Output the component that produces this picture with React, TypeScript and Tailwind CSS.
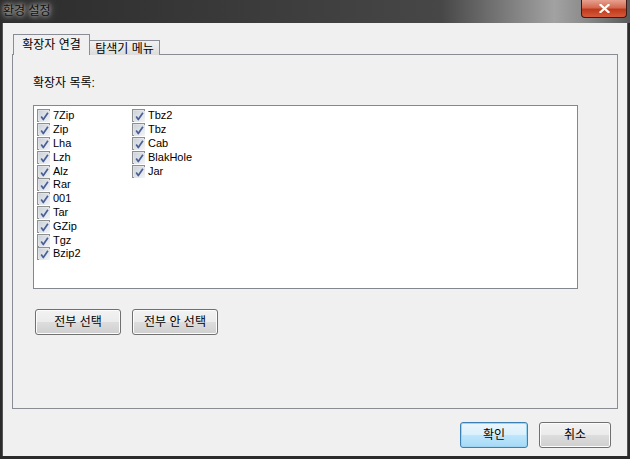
import React from "react";

const font = "font-['Liberation_Sans','Noto_Sans_CJK_KR',sans-serif]";

const left = ["7Zip", "Zip", "Lha", "Lzh", "Alz", "Rar", "001", "Tar", "GZip", "Tgz", "Bzip2"];
const right = ["Tbz2", "Tbz", "Cab", "BlakHole", "Jar"];

const CheckBox = () => (
  <span className="w-[13px] h-[13px] border border-[#8e8f8f] bg-[linear-gradient(135deg,#d8dde3,#f4f6f8)] p-[1px] shrink-0">
    <svg viewBox="0 0 11 11" className="w-[11px] h-[11px]">
      <rect x="0" y="0" width="11" height="11" fill="url(#cbg)" />
      <defs>
        <linearGradient id="cbg" x1="0" y1="0" x2="1" y2="1">
          <stop offset="0" stopColor="#cdd3da" />
          <stop offset="1" stopColor="#f3f5f7" />
        </linearGradient>
      </defs>
      <path d="M2.2 5.6 L4.3 8.6 L8.9 1.8" fill="none" stroke="#4a5f97" strokeWidth="1.7" strokeLinejoin="round" />
    </svg>
  </span>
);

const Item = ({ label }: { label: string }) => (
  <div className="flex items-center gap-[3px] h-[13.8px]">
    <CheckBox />
    <span className="text-[11px] text-black leading-none">{label}</span>
  </div>
);

const Button = ({ label, className = "", focused = false }: { label: string; className?: string; focused?: boolean }) => (
  <button
    className={`h-[26px] rounded-[3px] border text-[12px] text-black ${
      focused
        ? "border-[#3c7fb1] bg-[linear-gradient(#eaf6fd_0%,#d9f0fc_50%,#bee6fd_51%,#a7d9f5_100%)] shadow-[inset_0_0_0_1px_#9cd5f4]"
        : "border-[#707070] bg-[linear-gradient(#f2f2f2_0%,#ebebeb_50%,#dddddd_51%,#cfcfcf_100%)] shadow-[inset_0_0_0_1px_#fcfcfc]"
    } ${className}`}
  >
    {label}
  </button>
);

export default function App() {
  return (
    <div className={`w-[630px] h-[459px] bg-[#2b2b2b] flex flex-col ${font}`}>
      {/* title bar */}
      <div className="h-[23px] relative bg-[linear-gradient(90deg,#2c2c2c_0%,#3d3d3d_45%,#474747_70%,#a2a2a2_88%,#8a8a8a_93%,#5a5a5a_100%)]">
        <span className="absolute left-[3px] top-[5px] text-[12px] leading-none text-[#111] [text-shadow:0_0_4px_#e0e0e0,0_0_8px_#c8c8c8]">
          환경 설정
        </span>
        <div className="absolute right-[3px] top-0 w-[46px] h-[18px] rounded-b-[4px] border border-t-0 border-[#3a1a14] bg-[linear-gradient(#e8a08f_0%,#d36a50_45%,#c0391c_55%,#d45a3a_100%)] flex items-center justify-center">
          <svg viewBox="0 0 12 10" className="w-[11px] h-[9px]">
            <path d="M1.5 1 L10.5 9 M10.5 1 L1.5 9" stroke="#fff" strokeWidth="2.4" strokeLinecap="square" />
          </svg>
        </div>
      </div>

      {/* client */}
      <div className="flex-1 mx-[2px] mb-[3px] border-l border-r border-[#555] bg-[#f0f0f0] flex flex-col pl-[9px] pt-[11px]">
        {/* tabs */}
        <div className="flex items-end h-[21px] pl-[1px] relative z-10">
          <div className="h-[21px] w-[77px] border border-b-0 border-[#898c95] bg-[#f0f0f0] text-[12px] text-black flex items-center justify-center">
            확장자 연결
          </div>
          <div className="h-[15px] w-[70px] border border-l-0 border-b-0 border-[#898c95] bg-[linear-gradient(#f2f2f2,#dcdcdc)] text-[12px] text-black flex items-center justify-center pt-[2px]">
            탐색기 메뉴
          </div>
        </div>
        {/* panel */}
        <div className="w-[606px] h-[355px] -mt-px border border-[#898c95] bg-[#f0f0f0] flex flex-col pl-[20px]">
          <div className="mt-[22px] h-[14px] text-[12px] leading-none text-black">확장자 목록:</div>
          <div className="mt-[14px] w-[545px] h-[184px] border border-[#828790] bg-white flex pl-[3px] pt-[3px]">
            <div className="w-[95px] flex flex-col">
              {left.map((l) => (
                <Item key={l} label={l} />
              ))}
            </div>
            <div className="flex flex-col">
              {right.map((l) => (
                <Item key={l} label={l} />
              ))}
            </div>
          </div>
          <div className="mt-[20px] flex gap-[11px] pl-[2px]">
            <Button label="전부 선택" className="w-[86px]" />
            <Button label="전부 안 선택" className="w-[86px]" />
          </div>
        </div>
        {/* footer */}
        <div className="flex justify-end gap-[11px] mt-[13px] pr-[16px]">
          <Button label="확인" className="w-[68px]" focused />
          <Button label="취소" className="w-[72px]" />
        </div>
      </div>
    </div>
  );
}
